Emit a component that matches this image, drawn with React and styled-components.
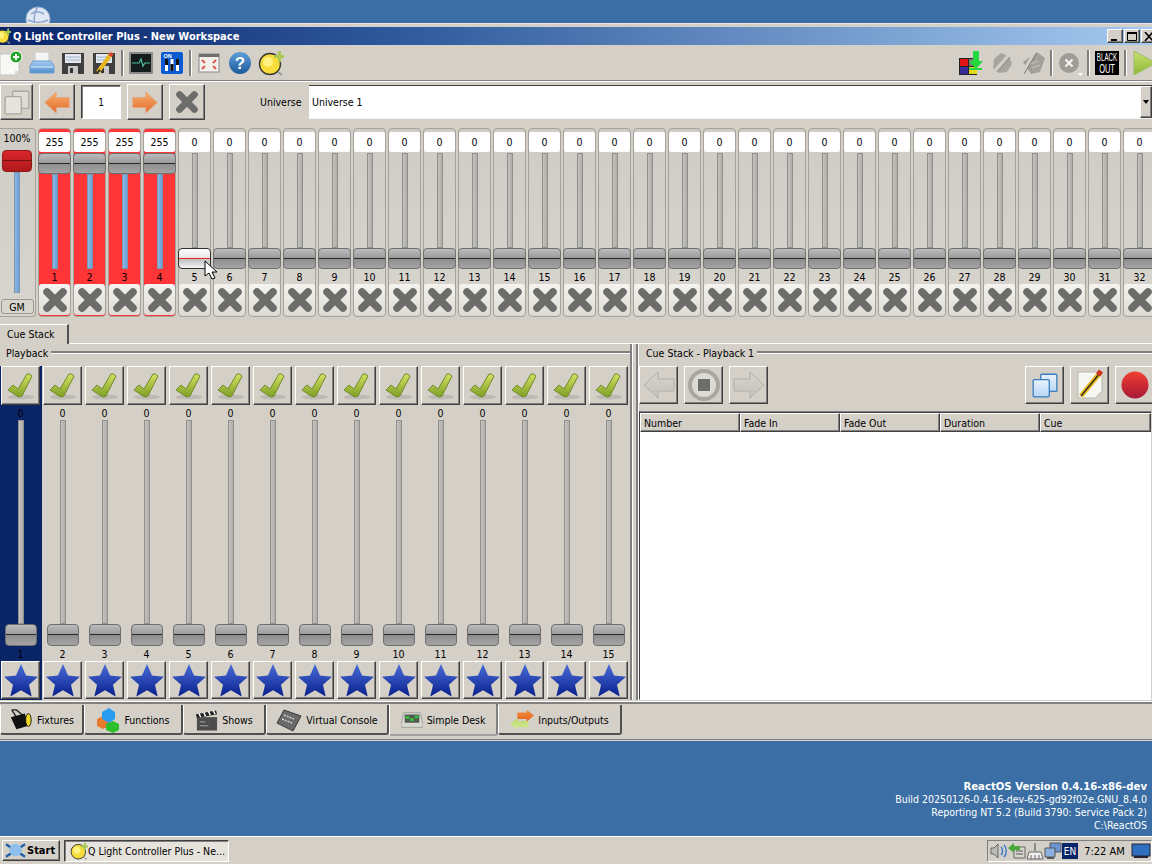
import React from 'react';
import styled, { createGlobalStyle, css } from 'styled-components';

const GlobalStyle = createGlobalStyle`
    html, body {
        margin: 0;
        padding: 0;
        width: 1152px;
        height: 864px;
        overflow: hidden;
        background: #3a6ea5;
        font-family: "DejaVu Sans", "Liberation Sans", sans-serif;
        font-stretch: condensed;
        font-size: 10.5px;
        color: #000;
    }
    * { box-sizing: border-box; }
`;

const raised = css`
    background: #d4d0c8;
    border: 1px solid;
    border-color: #fff #404040 #404040 #fff;
    box-shadow: inset -1px -1px 0 #808080;
`;

const Desktop = styled.div`
    position: relative;
    width: 1152px;
    height: 864px;
    display: flex;
    flex-direction: column;
    overflow: hidden;
    background: #3a6ea5;
`;

const DesktopTop = styled.div`
    height: 23px;
    flex: none;
    padding: 6px 0 0 25px;
    overflow: hidden;
`;

const Window = styled.div`
    height: 718px;
    flex: none;
    background: #d4d0c8;
    border-top: 1px solid #e8e6e0;
    padding-top: 3px;
    display: flex;
    flex-direction: column;
    overflow: hidden;
`;

const TitleBar = styled.div`
    height: 18px;
    flex: none;
    display: flex;
    align-items: center;
    gap: 1px;
    background: linear-gradient(90deg, #0a246a 0%, #2f5a9c 35%, #a6caf0 100%);
    color: #fff;
    font-weight: 700;
    font-size: 11px;
    margin-right: -5px;
`;

const TitleIcon = styled.span`
    display: flex;
    margin-left: -5px;
    width: 17px;
`;

const TitleText = styled.span`
    flex: 1;
    white-space: nowrap;
`;

const CaptionButton = styled.button`
    ${raised}
    width: 16px;
    height: 14px;
    padding: 0;
    display: flex;
    align-items: center;
    justify-content: center;
    color: #000;
`;

const Toolbar = styled.div`
    height: 35px;
    flex: none;
    display: flex;
    align-items: center;
    margin: 0 -7px 0 -5px;
`;

const ToolButton = styled.span`
    width: 31px;
    height: 30px;
    flex: none;
    display: flex;
    align-items: center;
    justify-content: center;
`;

const ToolSep = styled.span`
    width: 6px;
    height: 26px;
    flex: none;
    display: flex;
    justify-content: center;
    &::before {
        content: '';
        width: 2px;
        height: 100%;
        background: #808080;
        border-right: 1px solid #fff;
    }
`;

const Spacer = styled.span`
    flex: 1;
`;

const Rule = styled.div`
    height: 2px;
    flex: none;
    background: #808080;
    border-bottom: 1px solid #fff;
`;

const DeskBar = styled.div`
    height: 46px;
    flex: none;
    display: flex;
    align-items: flex-start;
    padding-top: 2px;
`;

const DeskButton = styled.button`
    ${raised}
    width: ${({ $w }) => $w || 36}px;
    height: 36px;
    flex: none;
    margin-right: 6px;
    padding: 0;
    display: flex;
    align-items: center;
    justify-content: center;
`;

const PageBox = styled.div`
    width: 40px;
    height: 34px;
    flex: none;
    margin: 1px 6px 0 0;
    background: #fff;
    border: 1px solid;
    border-color: #404040 #fff #fff #404040;
    box-shadow: inset 1px 1px 0 #808080;
    display: flex;
    align-items: center;
    justify-content: center;
    font-size: 10px;
`;

const UniverseLabel = styled.span`
    margin: 12px 0 0 49px;
    width: 49px;
    flex: none;
`;

const Combo = styled.div`
    flex: 1;
    height: 34px;
    margin-top: 1px;
    background: #fff;
    border-top: 1px solid #404040;
    border-bottom: 1px solid #f4f4f4;
    display: flex;
    align-items: center;
    padding-left: 3px;
`;

const ComboText = styled.span`
    flex: 1;
`;

const ComboArrow = styled.span`
    ${raised}
    width: 12px;
    height: 100%;
    display: flex;
    align-items: center;
    justify-content: center;
    &::before {
        content: '';
        border: 3px solid transparent;
        border-top: 4px solid #000;
        border-bottom: 0;
    }
`;

const FaderRow = styled.div`
    position: relative;
    height: 190px;
    flex: none;
    display: flex;
    gap: 2px;
    overflow: hidden;
`;

const MasterStrip = styled.div`
    width: 36px;
    flex: none;
    height: 189px;
    border: 1px solid #a5a29b;
    border-left: 0;
    border-radius: 0 4px 4px 0;
    background: linear-gradient(180deg, #cfccc6, #d8d5cf);
    display: flex;
    flex-direction: column;
    align-items: center;
    padding: 4px 1px 2px 0;
`;

const MasterValue = styled.div`
    height: 17px;
    line-height: 11px;
    flex: none;
`;

const GmButton = styled.button`
    width: 33px;
    height: 15px;
    flex: none;
    margin-top: 6px;
    padding: 0;
    border: 1px solid #9b9892;
    border-radius: 3px;
    background: #d8d5cf;
    font: inherit;
    color: #000;
`;

const SliderWrap = styled.div`
    flex: 1;
    min-height: 0;
    width: 100%;
    display: flex;
    flex-direction: column;
    align-items: center;
`;

const Track = styled.div`
    flex: 1;
    width: 6px;
    border: 1px solid;
    background: ${({ $lit }) => ($lit ? 'linear-gradient(90deg, #8db8e8, #6a9fd8)' : 'linear-gradient(90deg, #c4c3bf, #aeada9)')};
    border-color: ${({ $lit }) => ($lit ? '#7e96ac' : '#8f8f8c')};
`;

const Handle = styled.div`
    flex: none;
    width: ${({ $w }) => $w}px;
    height: ${({ $h }) => $h}px;
    border: 1px solid #6f6f6f;
    border-radius: 4px;
    position: relative;
    background: linear-gradient(180deg, #bcbcbc 0%, #9a9a9a 48%, #8e8e8e 52%, #a4a4a4 100%);
    ${({ $red }) => $red && css`
        background: linear-gradient(180deg, #d8262a 0%, #b01a1e 100%);
        border-color: #8c1c1c;
    `}
    ${({ $hover }) => $hover && css`
        background: linear-gradient(180deg, #fff 0%, #e6e6e6 45%, #c0c0c0 55%, #f4f4f4 100%);
        border-color: #303030;
    `}
    &::after {
        content: '';
        position: absolute;
        left: 0;
        right: 0;
        top: 50%;
        margin-top: -1px;
        height: 1px;
        background: ${({ $hover, $red }) => ($hover ? '#e22' : $red ? '#701010' : '#2a2a2a')};
    }
`;

const Channel = styled.div`
    width: 33px;
    height: 189px;
    flex: none;
    border: 1px solid #a5a29b;
    border-radius: 4px;
    padding: 3px 0 1px;
    display: flex;
    flex-direction: column;
    align-items: center;
    background: ${({ $on }) => ($on ? '#ff3538' : 'linear-gradient(180deg, #cfccc6, #d8d5cf)')};
`;

const ValueBox = styled.div`
    width: 31px;
    height: 20px;
    flex: none;
    margin-bottom: 1px;
    background: #fff;
    border-radius: 2px;
    display: flex;
    align-items: center;
    justify-content: center;
`;

const ChannelNo = styled.div`
    height: 15px;
    line-height: 16px;
    flex: none;
`;

const ResetButton = styled.button`
    width: 31px;
    height: 31px;
    flex: none;
    padding: 0;
    border: 0;
    border-radius: 3px;
    background: linear-gradient(180deg, #f4f3ef, #dedbd4);
    display: flex;
    align-items: center;
    justify-content: center;
`;

const Cursor = styled.svg`
    position: absolute;
    left: 204px;
    top: 260px;
    width: 13px;
    height: 20px;
`;

const TabRow = styled.div`
    height: 21px;
    flex: none;
    margin-top: 5px;
    display: flex;
    align-items: flex-end;
    border-bottom: 1px solid #fff;
`;

const PaneTab = styled.div`
    width: 69px;
    height: 20px;
    padding: 3px 0 0 7px;
    margin-bottom: -1px;
    background: #d4d0c8;
    border-top: 1px solid #fff;
    border-right: 2px solid #505050;
`;

const Panels = styled.div`
    height: 355px;
    flex: none;
    display: grid;
    grid-template-columns: 632px 1fr;
    gap: 4px;
`;

const Group = styled.section`
    display: flex;
    flex-direction: column;
    min-width: 0;
    ${({ $side }) => ($side === 'left'
        ? css`border-right: 2px solid #808080; box-shadow: 1px 0 0 #fff;`
        : css`border-left: 2px solid #808080; box-shadow: inset 1px 0 0 #fff;`)}
`;

const GroupTitle = styled.div`
    height: 17px;
    flex: none;
    display: flex;
    align-items: center;
    gap: 3px;
    padding-left: ${({ $pad }) => $pad}px;
    white-space: nowrap;
    &::after {
        content: '';
        flex: 1;
        height: 2px;
        background: #808080;
        border-bottom: 1px solid #fff;
    }
`;

const Playbacks = styled.div`
    display: flex;
    padding-top: 5px;
    flex: 1;
`;

const Playback = styled.div`
    width: 42px;
    flex: none;
    height: 334px;
    display: flex;
    flex-direction: column;
    align-items: center;
    background: ${({ $sel }) => ($sel ? '#0a2468' : 'transparent')};
    padding: 0 1px 1px 0;
`;

const BigButton = styled.button`
    ${raised}
    width: 39px;
    height: ${({ $h }) => $h || 39}px;
    flex: none;
    padding: 0;
    display: flex;
    align-items: center;
    justify-content: center;
`;

const PlaybackValue = styled.div`
    height: 15px;
    line-height: 17px;
    flex: none;
`;

const PlaybackNo = styled.div`
    height: 15px;
    line-height: 16px;
    flex: none;
`;

const CueTools = styled.div`
    display: flex;
    gap: 6px;
    padding: 5px 0 0 1px;
    margin-right: -2px;
    height: 45px;
    flex: none;
`;

const CueTable = styled.div`
    flex: 1;
    margin: 5px 0 0 1px;
    background: #fff;
    border: 1px solid;
    border-color: #808080 #d4d0c8 #fff #404040;
    display: flex;
    flex-direction: column;
`;

const CueHead = styled.div`
    display: grid;
    grid-template-columns: 100px 100px 100px 100px 1fr;
    height: 20px;
    flex: none;
    border-top: 1px solid #404040;
`;

const CueHeadCell = styled.div`
    ${raised}
    padding: 3px 0 0 3px;
`;

const BottomBar = styled.nav`
    height: 38px;
    flex: none;
    margin-top: 3px;
    border-top: 2px solid #808080;
    box-shadow: inset 0 -1px 0 #808080, 0 -1px 0 #fff;
    padding-top: 1px;
    display: flex;
    align-items: flex-start;
`;

const BottomTab = styled.div`
    width: ${({ $w }) => $w}px;
    height: ${({ $active }) => ($active ? 32 : 30)}px;
    margin-top: ${({ $active }) => ($active ? -1 : 0)}px;
    flex: none;
    display: flex;
    align-items: center;
    justify-content: center;
    gap: 4px;
    padding-top: 1px;
    background: #d4d0c8;
    border-left: 1px solid #fff;
    border-right: 2px solid ${({ $active }) => ($active ? '#808080' : '#505050')};
    border-bottom: 2px solid ${({ $active }) => ($active ? '#a0a0a0' : '#505050')};
    border-radius: 0 0 3px 3px;
    white-space: nowrap;
`;

const DesktopBody = styled.div`
    flex: 1;
    display: flex;
    flex-direction: column;
    justify-content: flex-end;
    align-items: flex-end;
    padding: 0 5px 4px 0;
    color: #fff;
    line-height: 13px;
`;

const VersionLine = styled.div`
    font-weight: ${({ $bold }) => ($bold ? 700 : 400)};
    font-size: ${({ $bold }) => ($bold ? '11.25px' : '10.5px')};
    white-space: nowrap;
`;

const Taskbar = styled.footer`
    height: 28px;
    flex: none;
    background: #d4d0c8;
    border-top: 1px solid #fff;
    padding: 3px 0 0 2px;
    display: flex;
    align-items: flex-start;
`;

const StartButton = styled.button`
    ${raised}
    width: 58px;
    height: 21px;
    padding: 0 0 0 2px;
    display: flex;
    align-items: center;
    gap: 1px;
    font: inherit;
    font-weight: 700;
    font-size: 11px;
    color: #000;
`;

const TaskButton = styled.div`
    width: 165px;
    height: 22px;
    margin-left: 4px;
    background: #e6e3dc;
    border: 1px solid;
    border-color: #404040 #fff #fff #404040;
    box-shadow: inset 1px 1px 0 #808080;
    display: flex;
    align-items: center;
    padding-left: 5px;
    white-space: nowrap;
`;

const Tray = styled.div`
    margin-left: auto;
    width: 165px;
    height: 22px;
    border: 1px solid;
    border-color: #808080 #fff #fff #808080;
    display: flex;
    align-items: center;
    padding-left: 2px;
`;

const Lang = styled.span`
    width: 16px;
    height: 16px;
    flex: none;
    background: #0a246a;
    color: #fff;
    font-size: 10px;
    display: flex;
    align-items: center;
    justify-content: center;
`;

const Clock = styled.span`
    flex: 1;
    text-align: center;
    white-space: nowrap;
    font-size: 11px;
`;

/* drawings */

const Grad = ({ id, from, to }) => (
    <defs>
        <linearGradient id={id} x1="0" y1="0" x2="0" y2="1">
            <stop offset="0" stopColor={from} />
            <stop offset="1" stopColor={to} />
        </linearGradient>
    </defs>
);

const QlcIcon = ({ size = 26 }) => (
    <svg width={size} height={size} viewBox="0 0 26 26">
        <circle cx="12" cy="14" r="10.500" fill="#f6dd3c" stroke="#3a3a30" strokeWidth="1.400" />
        <circle cx="10" cy="12" r="5" fill="#fff27e" />
        <path d="M20 22l4 3" stroke="#9a9a9a" strokeWidth="2" />
        <path d="M16 5h4V1h3v4h3v3h-3v4h-3V8h-4z" fill="#a8c850" />
    </svg>
);

const NewIcon = () => (
    <svg width="26" height="26" viewBox="0 0 26 26">
        <path d="M2 4h13l6 6v12l-3 3H2z" fill="#f8f8f6" stroke="#c4c4c0" />
        <path d="M17 25l4-4h-4z" fill="#d8d8d4" />
        <circle cx="18" cy="7" r="6" fill="#2aa42a" stroke="#fff" />
        <path d="M15 7h6M18 4v6" stroke="#fff" strokeWidth="2" />
    </svg>
);

const PrintIcon = () => (
    <svg width="26" height="26" viewBox="0 0 26 26">
        <Grad id="prn" from="#a8cdf2" to="#4f8ccc" />
        <path d="M6 2h14v11H6z" fill="#f4f4f2" stroke="#c8c8c4" />
        <path d="M4 11h18l3 5v7H1v-7z" fill="url(#prn)" stroke="#6b9ed2" />
        <path d="M2 17h22" stroke="#e4f0fb" />
    </svg>
);

const SaveIcon = ({ pencil }) => (
    <svg width="26" height="26" viewBox="0 0 26 26">
        <path d="M2 3h22v21H2z" fill="#3f3f3f" />
        <path d="M5 4h16v9H5z" fill="#e6eaf0" />
        <path d="M6 7h14M6 10h14" stroke="#9fb4cc" />
        <path d="M8 16h10v8H8z" fill="#c8c8c8" />
        <path d="M10 18h3v5h-3z" fill="#333" />
        {pencil && <path d="M7 22L20 4" stroke="#e8b820" strokeWidth="4" />}
        {pencil && <path d="M6 23l2-4 2 2z" fill="#222" />}
        {pencil && <path d="M19 6l2-3" stroke="#d84030" strokeWidth="4" />}
    </svg>
);

const MonitorIcon = () => (
    <svg width="26" height="26" viewBox="0 0 26 26">
        <rect x="1" y="2" width="24" height="22" fill="#8a8a88" rx="1" />
        <rect x="3" y="4" width="20" height="18" fill="#141c1c" />
        <path d="M4 13h7l2-4 2 7 2-3h5" fill="none" stroke="#4cc0a0" strokeWidth="1.200" />
    </svg>
);

const DipIcon = () => (
    <svg width="24" height="24" viewBox="0 0 24 24">
        <rect x="1" y="1" width="22" height="22" rx="2" fill="#0a5ad2" />
        <path d="M5 8h3v12H5zM10.500 8h3v12h-3zM16 8h3v12h-3z" fill="#fff" />
        <path d="M5 8h3v6H5zM10.500 13h3v7h-3zM16 8h3v6h-3z" fill="#111" />
        <text x="3.500" y="7" fontSize="5.500" fontWeight="700" fill="#fff" fontFamily="Liberation Sans">ON</text>
    </svg>
);

const WindowIcon = () => (
    <svg width="24" height="24" viewBox="0 0 24 24">
        <rect x="2" y="3" width="20" height="18" fill="#f2f0ec" stroke="#8a8a8a" />
        <path d="M2 3h20v3H2z" fill="#6f6f6d" />
        <path d="M5 9l3 3M19 9l-3 3M5 18l3-3M19 18l-3-3" stroke="#e05a50" strokeWidth="2" />
    </svg>
);

const HelpIcon = () => (
    <svg width="24" height="24" viewBox="0 0 24 24">
        <Grad id="hlp" from="#5f9fd8" to="#1d5a9c" />
        <circle cx="12" cy="12" r="11" fill="url(#hlp)" />
        <text x="12" y="18" textAnchor="middle" fontSize="17" fontWeight="700" fill="#fff" fontFamily="Liberation Sans">?</text>
    </svg>
);

const FixtureColorIcon = () => (
    <svg width="26" height="26" viewBox="0 0 26 26">
        <path d="M1 8h18v17H1z" fill="#222" />
        <path d="M2 9h8v7H2z" fill="#e01414" />
        <path d="M2 17h8v7H2z" fill="#3a2c96" />
        <path d="M11 17h8v7h-8z" fill="#e8d820" />
        <path d="M11 9h8v7h-8z" fill="#7a7a7a" />
        <path d="M15 1h6v10h4l-7 8-7-8h4z" fill="#22d83c" />
        <path d="M11 19h13" stroke="#22d83c" strokeWidth="2" />
    </svg>
);

const GhostHexIcon = () => (
    <svg width="26" height="26" viewBox="0 0 26 26">
        <path d="M5 9l7-6 8 3 3 8-5 8-8 1-6-5z" fill="#a8a59f" />
        <path d="M6 21L20 5" stroke="#d0cec8" strokeWidth="3.500" />
        <path d="M8 22L21 7" stroke="#85827c" />
    </svg>
);

const GhostNoteIcon = () => (
    <svg width="26" height="26" viewBox="0 0 26 26">
        <path d="M3 12L17 2l8 6-5 14-9 2z" fill="#a3a09a" />
        <path d="M10 14l8-3M12 18l8-3" stroke="#c9c7c1" />
        <path d="M2 24L14 3" stroke="#d2d0ca" strokeWidth="3" />
        <path d="M4 24L16 4" stroke="#7f7c76" />
    </svg>
);

const StopCircleIcon = () => (
    <svg width="26" height="26" viewBox="0 0 26 26">
        <circle cx="12" cy="13" r="10" fill="#a09d97" />
        <path d="M8.500 9.500l7 7M15.500 9.500l-7 7" stroke="#f2f2f0" strokeWidth="2.400" />
        <path d="M21 23h5l-2.500 3z" fill="#fff" />
    </svg>
);

const BlackoutIcon = () => (
    <svg width="24" height="24" viewBox="0 0 24 24">
        <rect width="24" height="24" fill="#000" />
        <g transform="translate(12 0) scale(.62 1)">
            <text y="10.500" textAnchor="middle" fontSize="10" fill="#fff" fontFamily="Liberation Sans">BLACK</text>
            <text y="22" textAnchor="middle" fontSize="12" fill="#fff" fontFamily="Liberation Sans">OUT</text>
        </g>
    </svg>
);

const PlayIcon = () => (
    <svg width="26" height="26" viewBox="0 0 26 26">
        <Grad id="ply" from="#c8e070" to="#8fb838" />
        <path d="M3 1l22 12-22 12z" fill="url(#ply)" stroke="#a0bc68" />
    </svg>
);

const PagesIcon = ({ gray }) => (
    <svg width="28" height="28" viewBox="0 0 26 26">
        <Grad id="pgs" from="#e8f2fc" to="#b8d6f4" />
        <rect x="9" y="3" width="15" height="16" rx="1" fill={gray ? '#dedcd6' : 'url(#pgs)'} stroke={gray ? '#aaa8a2' : '#3a7cc0'} strokeWidth="1.200" />
        <rect x="2" y="8" width="15" height="16" rx="1" fill={gray ? '#e6e4de' : 'url(#pgs)'} stroke={gray ? '#aaa8a2' : '#3a7cc0'} strokeWidth="1.200" />
    </svg>
);

const ArrowIcon = ({ dir, gray, w = 26, h = 23 }) => (
    <svg width={w} height={h} viewBox="0 0 32 28">
        <Grad id={gray ? 'arg' : 'aro'} from={gray ? '#d8d5ce' : '#f7b070'} to={gray ? '#c4c1ba' : '#e26a2a'} />
        <path
            d={dir === 'left' ? 'M1 14L15 1v7h16v12H15v7z' : 'M31 14L17 1v7H1v12h16v7z'}
            fill={`url(#${gray ? 'arg' : 'aro'})`}
            stroke={gray ? '#b0aea8' : '#e8a070'}
        />
    </svg>
);

const CrossIcon = ({ size = 26 }) => (
    <svg width={size} height={size} viewBox="0 0 26 26">
        <path d="M5 5l16 16M21 5L5 21" stroke="#6c6c6a" strokeWidth="7.500" strokeLinecap="round" />
    </svg>
);

const CheckIcon = () => (
    <svg width="32" height="32" viewBox="0 0 32 32">
        <Grad id="chk" from="#d4e264" to="#7f9f24" />
        <ellipse cx="16" cy="27" rx="13" ry="2.500" fill="#bdbab3" />
        <path d="M3 20l5-5 5 4 9-15q2-1 5 2L17 26q-3 2-5 0z" fill="url(#chk)" stroke="#6f8a2a" strokeLinejoin="round" />
    </svg>
);

const StarIcon = () => (
    <svg width="34" height="34" viewBox="0 0 34 34">
        <Grad id="str" from="#4a6cd8" to="#08208c" />
        <path d="M17 1l5 11.500 12 1.200-9 8 2.700 11.800L17 27.300 6.300 33.500 9 21.700l-9-8 12-1.200z" fill="url(#str)" />
    </svg>
);

const StopPlayIcon = () => (
    <svg width="34" height="34" viewBox="0 0 34 34">
        <circle cx="17" cy="17" r="14" fill="#dcdad4" stroke="#a8a69e" strokeWidth="4" />
        <rect x="11" y="11" width="12" height="12" fill="#6c6c6a" />
    </svg>
);

const PencilNoteIcon = () => (
    <svg width="32" height="32" viewBox="0 0 32 32">
        <path d="M4 3h24v19l-7 7H4z" fill="#f6f6f2" stroke="#b8b8b2" />
        <path d="M7 27L26 4" stroke="#e8b820" strokeWidth="5" />
        <path d="M7 27L26 4" stroke="#222" strokeWidth="1.200" />
        <path d="M24 6l3-4" stroke="#d03020" strokeWidth="5" />
    </svg>
);

const RecordIcon = () => (
    <svg width="28" height="28" viewBox="0 0 28 28">
        <Grad id="rec" from="#f04030" to="#a81838" />
        <circle cx="14" cy="14" r="13.500" fill="url(#rec)" />
    </svg>
);

const FixturesIcon = () => (
    <svg width="24" height="24" viewBox="0 0 26 24">
        <path d="M3 1l5 8M3 1h5l6 5" stroke="#222" strokeWidth="1.500" fill="none" />
        <path d="M2 9l15-4 5 13-14 4z" fill="#111" />
        <ellipse cx="21" cy="12" rx="3" ry="7" fill="#f0d820" stroke="#111" />
    </svg>
);

const FunctionsIcon = () => (
    <svg width="24" height="26" viewBox="0 0 24 26">
        <path d="M1 12l6-3 6 3v7l-6 3-6-3z" fill="#e87a2c" />
        <path d="M10 17l7-3 6 3v6l-6 3-7-3z" fill="#2cc02c" />
        <path d="M6 5l7-4 6 4v7l-6 4-7-4z" fill="#2a9cf0" />
    </svg>
);

const ShowsIcon = () => (
    <svg width="23" height="24" viewBox="0 0 24 24">
        <path d="M2 9h21v14H2z" fill="#4c4c4c" />
        <path d="M1 6l21-4 1 4-21 4z" fill="#222" />
        <path d="M4 5l2 4M9 4l2 4M14 3l2 4M19 2l2 4" stroke="#fff" strokeWidth="1.500" />
        <path d="M5 14h6M5 18h9" stroke="#a8a8a8" />
    </svg>
);

const ConsoleIcon = () => (
    <svg width="26" height="24" viewBox="0 0 26 24">
        <path d="M8 2l17 6-8 15L1 15z" fill="#6a6a6a" stroke="#3a3a3a" />
        <path d="M8 7l10 4M6 11l10 4" stroke="#cfcfcf" strokeWidth="1.500" strokeDasharray="2 1" />
    </svg>
);

const DeskIcon = () => (
    <svg width="22" height="18" viewBox="0 0 24 18">
        <path d="M3 1h18l3 13v3H0v-3z" fill="#d8d8d2" stroke="#a0a09a" />
        <path d="M4 3h16v9H4z" fill="#505a50" />
        <path d="M5 5h4v3H5zM10 7h4v3h-4zM15 4h4v3h-4z" fill="#3cc040" />
    </svg>
);

const IoIcon = () => (
    <svg width="24" height="22" viewBox="0 0 26 22">
        <Grad id="ioo" from="#f09040" to="#e86020" />
        <Grad id="iog" from="#b8d860" to="#d8e8a8" />
        <path d="M26 6l-8-6v3H8v7h10v3z" fill="url(#ioo)" />
        <path d="M0 15l8-6v3h12v7H8v3z" fill="url(#iog)" />
    </svg>
);

const Globe = () => (
    <svg width="26" height="26" viewBox="0 0 26 26">
        <circle cx="13" cy="13" r="12" fill="#dfe8f4" stroke="#9fb0cc" />
        <path d="M6 8c4-3 8-3 13 0M3 14c6 3 14 3 20 0M13 1c-5 6-5 18 0 24" fill="none" stroke="#8ea6cc" strokeWidth="1.500" />
    </svg>
);

const StartLogo = () => (
    <svg width="21" height="18" viewBox="0 0 22 18">
        <path d="M1 2l20 13M21 2L1 15" stroke="#1e5ea8" strokeWidth="2.500" />
        <circle cx="11" cy="8" r="6.500" fill="#8ec0ee" />
    </svg>
);

const TrayIcons = () => (
    <>
        <svg width="18" height="18" viewBox="0 0 18 18">
            <path d="M1 6h3l4-4v14l-4-4H1z" fill="#bcbcb6" stroke="#666" />
            <path d="M11 5c2 2 2 6 0 8M14 3c3 3 3 9 0 12" fill="none" stroke="#3c78c8" strokeWidth="1.500" />
        </svg>
        <svg width="18" height="18" viewBox="0 0 18 18">
            <path d="M6 5h11v11H6z" fill="#d8d6d0" stroke="#666" />
            <path d="M8 9h7M8 12h7" stroke="#555" />
            <path d="M0 6l6-5v3h6v4H6v3z" fill="#48a838" />
        </svg>
        <svg width="18" height="18" viewBox="0 0 18 18">
            <path d="M8 1h2v8H8z" fill="#8a8a86" />
            <path d="M3 10h12l2 7H1z" fill="#eeeeea" stroke="#666" />
            <path d="M5 13v4M9 13v4M13 13v4" stroke="#666" />
        </svg>
        <svg width="18" height="18" viewBox="0 0 18 18">
            <path d="M6 1h11v9H6z" fill="#6c94d0" stroke="#555" />
            <path d="M1 6h10v9H1z" fill="#8cb0e0" stroke="#555" />
            <path d="M3 16h7" stroke="#555" strokeWidth="2" />
        </svg>
    </>
);

const ChannelStrip = ({ no, on, hover }) => (
    <Channel $on={on}>
        <ValueBox>{on ? 255 : 0}</ValueBox>
        <SliderWrap>
            {!on && <Track />}
            <Handle $w={33} $h={21} $hover={hover} />
            {on && <Track $lit />}
        </SliderWrap>
        <ChannelNo>{no}</ChannelNo>
        <ResetButton><CrossIcon /></ResetButton>
    </Channel>
);

const channels = Array.from({ length: 32 }, (_, i) => i + 1);
const playbacks = Array.from({ length: 15 }, (_, i) => i + 1);

const App = () => (
    <Desktop>
        <GlobalStyle />
        <DesktopTop><Globe /></DesktopTop>
        <Window>
            <TitleBar>
                <TitleIcon><QlcIcon size={16} /></TitleIcon>
                <TitleText>Q Light Controller Plus - New Workspace</TitleText>
                <CaptionButton>
                    <svg width="10" height="9" viewBox="0 0 10 9"><path d="M1 7h6v2H1z" fill="#000" /></svg>
                </CaptionButton>
                <CaptionButton>
                    <svg width="10" height="9" viewBox="0 0 10 9"><path d="M.5 1.500h9v7h-9z" fill="none" stroke="#000" /><path d="M0 0h10v2H0z" fill="#000" /></svg>
                </CaptionButton>
                <CaptionButton>
                    <svg width="10" height="9" viewBox="0 0 10 9"><path d="M1 0l8 9M9 0L1 9" stroke="#000" strokeWidth="1.600" /></svg>
                </CaptionButton>
            </TitleBar>
            <Toolbar>
                <ToolButton><NewIcon /></ToolButton>
                <ToolButton><PrintIcon /></ToolButton>
                <ToolButton><SaveIcon /></ToolButton>
                <ToolButton><SaveIcon pencil /></ToolButton>
                <ToolSep />
                <ToolButton><MonitorIcon /></ToolButton>
                <ToolButton><DipIcon /></ToolButton>
                <ToolSep />
                <ToolButton><WindowIcon /></ToolButton>
                <ToolButton><HelpIcon /></ToolButton>
                <ToolButton><QlcIcon /></ToolButton>
                <Spacer />
                <ToolButton><FixtureColorIcon /></ToolButton>
                <ToolButton><GhostHexIcon /></ToolButton>
                <ToolButton><GhostNoteIcon /></ToolButton>
                <ToolSep />
                <ToolButton><StopCircleIcon /></ToolButton>
                <ToolSep />
                <ToolButton><BlackoutIcon /></ToolButton>
                <ToolSep />
                <ToolButton><PlayIcon /></ToolButton>
            </Toolbar>
            <Rule />
            <DeskBar>
                <DeskButton $w={33}><PagesIcon gray /></DeskButton>
                <DeskButton><ArrowIcon dir="left" /></DeskButton>
                <PageBox>1</PageBox>
                <DeskButton><ArrowIcon dir="right" /></DeskButton>
                <DeskButton><CrossIcon size={24} /></DeskButton>
                <UniverseLabel>Universe</UniverseLabel>
                <Combo>
                    <ComboText>Universe 1</ComboText>
                    <ComboArrow />
                </Combo>
            </DeskBar>
            <FaderRow>
                <MasterStrip>
                    <MasterValue>100%</MasterValue>
                    <SliderWrap>
                        <Handle $w={30} $h={22} $red />
                        <Track $lit />
                    </SliderWrap>
                    <GmButton>GM</GmButton>
                </MasterStrip>
                {channels.map((no) => (
                    <ChannelStrip key={no} no={no} on={no <= 4} hover={no === 5} />
                ))}
            </FaderRow>
            <TabRow>
                <PaneTab>Cue Stack</PaneTab>
            </TabRow>
            <Panels>
                <Group $side="left">
                    <GroupTitle $pad={6}>Playback</GroupTitle>
                    <Playbacks>
                        {playbacks.map((no) => (
                            <Playback key={no} $sel={no === 1}>
                                <BigButton><CheckIcon /></BigButton>
                                <PlaybackValue>0</PlaybackValue>
                                <SliderWrap>
                                    <Track />
                                    <Handle $w={32} $h={22} />
                                </SliderWrap>
                                <PlaybackNo>{no}</PlaybackNo>
                                <BigButton $h={38}><StarIcon /></BigButton>
                            </Playback>
                        ))}
                    </Playbacks>
                </Group>
                <Group $side="right">
                    <GroupTitle $pad={8}>Cue Stack - Playback 1</GroupTitle>
                    <CueTools>
                        <BigButton $h={38}><ArrowIcon dir="left" gray w={32} h={30} /></BigButton>
                        <BigButton $h={38}><StopPlayIcon /></BigButton>
                        <BigButton $h={38}><ArrowIcon dir="right" gray w={32} h={30} /></BigButton>
                        <Spacer />
                        <BigButton $h={38}><PagesIcon /></BigButton>
                        <BigButton $h={38}><PencilNoteIcon /></BigButton>
                        <BigButton $h={38}><RecordIcon /></BigButton>
                    </CueTools>
                    <CueTable>
                        <CueHead>
                            <CueHeadCell>Number</CueHeadCell>
                            <CueHeadCell>Fade In</CueHeadCell>
                            <CueHeadCell>Fade Out</CueHeadCell>
                            <CueHeadCell>Duration</CueHeadCell>
                            <CueHeadCell>Cue</CueHeadCell>
                        </CueHead>
                    </CueTable>
                </Group>
            </Panels>
            <BottomBar>
                <BottomTab $w={84}><FixturesIcon />Fixtures</BottomTab>
                <BottomTab $w={99}><FunctionsIcon />Functions</BottomTab>
                <BottomTab $w={83}><ShowsIcon />Shows</BottomTab>
                <BottomTab $w={123}><ConsoleIcon />Virtual Console</BottomTab>
                <BottomTab $w={109} $active><DeskIcon />Simple Desk</BottomTab>
                <BottomTab $w={124}><IoIcon />Inputs/Outputs</BottomTab>
            </BottomBar>
        </Window>
        <DesktopBody>
            <VersionLine $bold>ReactOS Version 0.4.16-x86-dev</VersionLine>
            <VersionLine>Build 20250126-0.4.16-dev-625-gd92f02e.GNU_8.4.0</VersionLine>
            <VersionLine>Reporting NT 5.2 (Build 3790: Service Pack 2)</VersionLine>
            <VersionLine>C:\ReactOS</VersionLine>
        </DesktopBody>
        <Taskbar>
            <StartButton><StartLogo />Start</StartButton>
            <TaskButton><QlcIcon size={18} />Q Light Controller Plus - Ne...</TaskButton>
            <Tray>
                <TrayIcons />
                <Lang>EN</Lang>
                <Clock>7:22 AM</Clock>
                <svg width="20" height="16" viewBox="0 0 20 16">
                    <rect x="1" y="1" width="18" height="12" fill="#2f6fc0" stroke="#223" />
                    <path d="M3 14h14" stroke="#223" strokeWidth="2" />
                </svg>
            </Tray>
        </Taskbar>
        <Cursor viewBox="0 0 13 20">
            <path d="M1 1v15l4-3 3 6 3-1-3-6h5z" fill="#fff" stroke="#000" />
        </Cursor>
    </Desktop>
);

export default App;
